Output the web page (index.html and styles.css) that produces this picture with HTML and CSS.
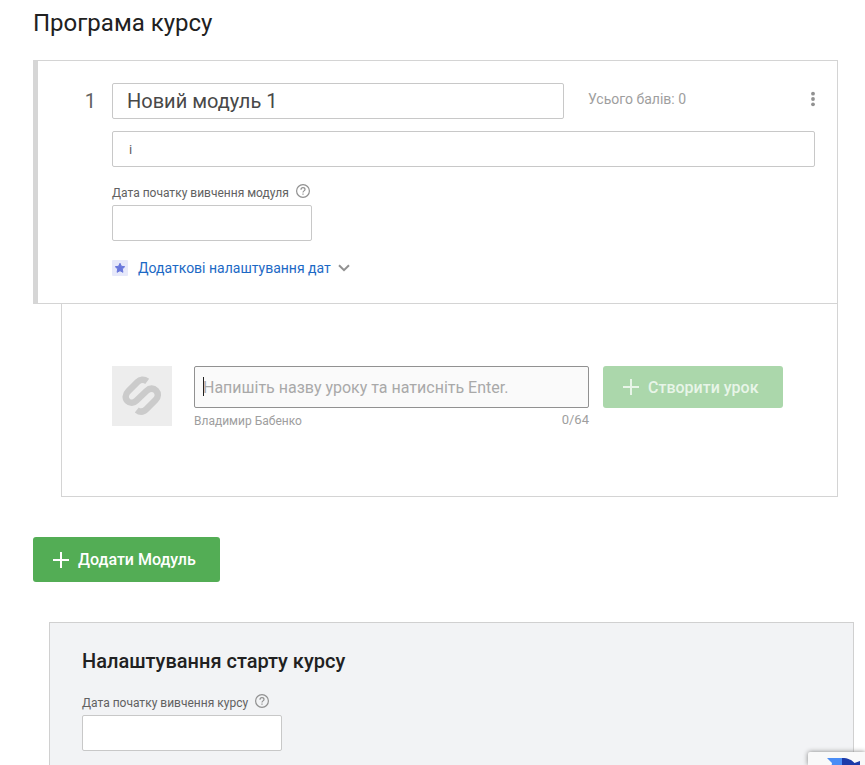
FILE: index.html
```html
<!DOCTYPE html>
<html lang="uk">
<head>
<meta charset="utf-8">
<title>Програма курсу</title>
<link rel="stylesheet" href="styles.css">
</head>
<body>
<main class="page">
  <h1 class="page-title">Програма курсу</h1>

  <section class="module">
    <span class="module-number">1</span>
    <div class="module-body">
      <div class="module-head">
        <input class="field module-name" type="text" value="Новий модуль 1" aria-label="Назва модуля">
        <span class="points">Усього балів: 0</span>
        <button class="icon-button" type="button" aria-label="Меню модуля">
          <svg width="4" height="16" viewBox="0 0 4 16" fill="#919191"><circle cx="2" cy="2.700" r="1.900"/><circle cx="2" cy="8" r="1.900"/><circle cx="2" cy="13.300" r="1.900"/></svg>
        </button>
      </div>
      <input class="field module-description" type="text" value="і" aria-label="Опис модуля">
      <div class="date-field">
        <div class="date-label">
          <label for="module-date">Дата початку вивчення модуля</label>
          <svg class="help" viewBox="0 0 14 14"><circle cx="7" cy="7" r="6.400"/><path d="M5 5.700C5 4.400 5.900 3.700 7 3.700s2 .7 2 1.800c0 1.300-2 1.500-2 2.900M7 9.500v1.200"/></svg>
        </div>
        <input class="field date-input" id="module-date" type="text">
      </div>
      <button class="dates-toggle" type="button">
        <svg width="16" height="16" viewBox="0 0 16 16"><rect width="16" height="16" rx="1" fill="#e7e9fa"/><path fill="#6a78dc" stroke="#6a78dc" stroke-linejoin="round" d="M8 3.300l1.400 3 3.300.4-2.400 2.300.6 3.300L8 10.700l-2.900 1.600.6-3.300-2.400-2.300 3.300-.4z"/></svg>
        <span class="dates-text">Додаткові налаштування дат</span>
        <svg width="12" height="8" viewBox="0 0 12 8" fill="none" stroke="#919191" stroke-width="2"><path d="M1 1.200l5 5 5-5"/></svg>
      </button>
    </div>
  </section>

  <section class="lessons">
    <svg class="lesson-cover" viewBox="0 0 60 60"><rect width="60" height="60" fill="#ededed"/><g fill="none" stroke="#cbcbcb" stroke-width="6.500"><path d="M35.200 15.400C32 13 28 13.500 25.500 16L16.500 25C13 28.500 13 32.500 15.500 35C18 37.500 21.500 37.500 24.500 34.500L34.500 25C38 21.800 41.500 22 44 24.500C46.600 27.300 46.500 31 43.500 34L34.500 43C31.500 46 28 46.500 24.800 44"/></g></svg>
    <div class="lesson-entry">
      <input class="lesson-name" type="text" placeholder="Напишіть назву уроку та натисніть Enter." aria-label="Назва уроку" maxlength="64" autofocus>
      <span class="caret"></span>
      <div class="lesson-meta"><span class="author">Владимир Бабенко</span><span class="counter">0/64</span></div>
    </div>
    <button class="button create-lesson" type="button" disabled>
      <svg width="16" height="16" viewBox="0 0 16 16"><path d="M8 0v16M0 8h16"/></svg>
      Створити урок
    </button>
  </section>

  <button class="button add-module" type="button">
    <svg width="16" height="16" viewBox="0 0 16 16"><path d="M8 0v16M0 8h16"/></svg>
    Додати Модуль
  </button>

  <section class="start-settings">
    <h2 class="settings-title">Налаштування старту курсу</h2>
    <div class="date-label">
      <label for="course-date">Дата початку вивчення курсу</label>
      <svg class="help" viewBox="0 0 14 14"><circle cx="7" cy="7" r="6.400"/><path d="M5 5.700C5 4.400 5.900 3.700 7 3.700s2 .7 2 1.800c0 1.300-2 1.500-2 2.900M7 9.500v1.200"/></svg>
    </div>
    <input class="field date-input" id="course-date" type="text">
  </section>
</main>

<div class="captcha">
  <svg width="38" height="8" viewBox="0 0 38 8"><path fill="#4a8df6" d="M0 0h15v8H4.500L5 5z"/><path fill="#1c3aa9" d="M15 0c6 0 10 2 12.500 5L33 3v5H15z"/></svg>
</div>
</body>
</html>
```

FILE: styles.css
```css
* { box-sizing: border-box; }

body {
  margin: 0;
  background: #fff;
  color: #616161;
  font-family: Roboto, "Liberation Sans", sans-serif;
}

input, button { font: inherit; color: inherit; }
button { border: 0; padding: 0; background: none; }
svg { display: block; flex: none; }

.page {
  display: flex;
  flex-direction: column;
  min-height: 100vh;
  padding: 8px 27px 0 33px;
}

.page-title {
  margin: 0 0 22px;
  color: #212121;
  font-size: 24px;
  font-weight: 400;
  line-height: 30px;
}

.field {
  height: 36px;
  border: 1px solid #c8c8c8;
  border-radius: 2px;
  background: #fff;
  outline: 0;
}

.module {
  display: flex;
  padding: 22px 22px 25px 0;
  border: 1px solid #d4d4d4;
  border-left: 5px solid #d6d6d6;
}

.module-number {
  flex: none;
  width: 74px;
  padding-right: 16px;
  font-size: 20px;
  line-height: 36px;
  text-align: right;
}

.module-body { flex: 1; min-width: 0; }
.module-head { display: flex; align-items: center; }

.module-name {
  flex: 0 1 452px;
  min-width: 0;
  padding: 0 14px;
  color: #484848;
  font-size: 20px;
}

.points {
  margin-left: 24px;
  color: #9e9e9e;
  font-size: 14px;
  line-height: 32px;
  white-space: nowrap;
  align-self: flex-start;
}

.icon-button {
  align-self: flex-start;
  margin-left: auto;
  padding: 8px 0;
}

.module-description {
  display: block;
  width: 100%;
  margin-top: 12px;
  padding: 0 16px;
  font-size: 13px;
}

.date-field { margin-top: 16px; }

.date-label {
  display: flex;
  align-items: center;
  gap: 7px;
  height: 20px;
  margin-bottom: 2px;
  font-size: 12px;
  line-height: 20px;
}

.help {
  width: 14px;
  height: 14px;
  margin-bottom: 4px;
  fill: none;
  stroke: #919191;
  stroke-width: 1.2;
}

.date-input {
  display: block;
  width: 200px;
  padding: 0 12px;
}

.dates-toggle {
  display: flex;
  align-items: center;
  margin-top: 17px;
  color: #1c69c5;
  font-size: 14px;
  line-height: 20px;
}

.dates-text { margin: 0 7px 0 10px; }

.lessons {
  display: flex;
  align-items: flex-start;
  margin-left: 28px;
  padding: 62px 54px 66px 50px;
  border: 1px solid #d4d4d4;
  border-top: 0;
}

.lesson-cover { width: 60px; height: 60px; }

.lesson-entry {
  position: relative;
  flex: 1;
  min-width: 0;
  margin: 0 14px 0 22px;
}

.lesson-name {
  display: block;
  width: 100%;
  height: 42px;
  padding: 0 8px;
  border: 1px solid #919191;
  border-radius: 2px;
  outline: 0;
  background: #fafafa;
  caret-color: transparent;
  font-size: 16px;
}

.lesson-name::placeholder { color: #a9a9a9; opacity: 1; }

.caret {
  position: absolute;
  top: 11px;
  left: 9px;
  width: 1px;
  height: 19px;
  background: #212121;
}

.lesson-meta {
  display: flex;
  justify-content: space-between;
  margin-top: 4px;
  color: #9e9e9e;
  font-size: 12px;
  line-height: 18px;
}

.counter { font-size: 13px; line-height: 16px; }

.button {
  display: flex;
  align-items: center;
  gap: 9px;
  border-radius: 3px;
  padding: 0 20px;
  background: #53ad55;
  color: #fff;
  font-size: 16px;
  font-weight: 500;
  white-space: nowrap;
}

.button path { stroke: currentColor; stroke-width: 2; }

.create-lesson {
  flex: none;
  width: 180px;
  height: 42px;
  background: #abd7ab;
  color: #e8f5e8;
}

.add-module {
  align-self: flex-start;
  width: 187px;
  height: 45px;
  margin: 40px 0;
}

.start-settings {
  flex: 1;
  margin: 0 -11px 0 16px;
  margin-right: -16px;
  padding: 24px 32px 14px;
  border: 1px solid #d0d0d0;
  border-bottom: 0;
  background: #f2f3f5;
}

.settings-title {
  margin: 0 0 18px;
  color: #212121;
  font-size: 20px;
  font-weight: 500;
  line-height: 28px;
}

.captcha {
  position: fixed;
  right: 0;
  bottom: 0;
  height: 13px;
  padding: 6px 0 0 19px;
  border-radius: 2px 0 0 0;
  background: #f9f9f9;
  box-shadow: 0 0 5px #808080;
}
```
